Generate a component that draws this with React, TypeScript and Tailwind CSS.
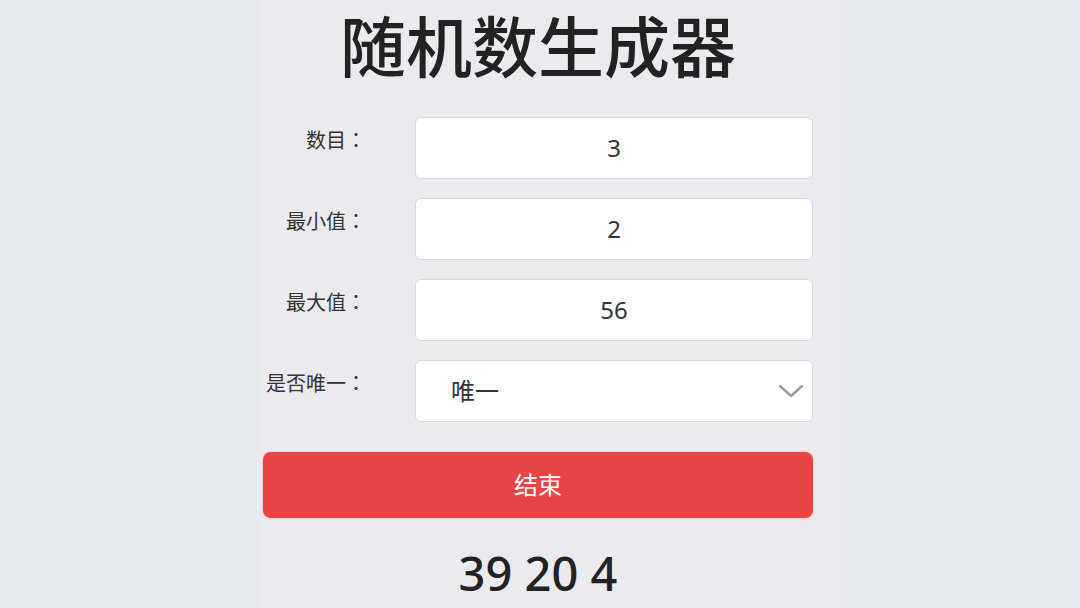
import React from "react";

const font = { fontFamily: '"Noto Sans", "Noto Sans CJK SC", sans-serif' };
const colonFont = { fontFamily: '"Noto Sans CJK JP", sans-serif' };

const Label: React.FC<{ text: string }> = ({ text }) => (
  <label className="w-[103px] pt-[9px] text-right text-[20px] leading-[28px] text-[#333]">
    {text}
    <span style={colonFont}>：</span>
  </label>
);

interface FieldProps {
  label: string;
  value: string;
}

const Field: React.FC<FieldProps> = ({ label, value }) => (
  <div className="flex items-start h-[62px]">
    <Label text={label} />
    <div className="ml-[49px] w-[398px] h-[62px] flex items-center justify-center bg-white border border-[#d8d8dd] rounded-[6px] text-[24px] text-[#333]">
      {value}
    </div>
  </div>
);

export default function App() {
  const fields = [
    { label: "数目", value: "3" },
    { label: "最小值", value: "2" },
    { label: "最大值", value: "56" },
  ];

  return (
    <div className="min-h-screen bg-[#e7eaed] flex" style={font}>
      <div className="ml-[260px] w-[580px] min-h-screen bg-[#ebebef] pl-[3px] pr-[27px] pt-[13px]">
        <h1 className="text-center text-[66px] leading-[66px] font-medium text-[#222]">
          随机数生成器
        </h1>

        <div className="mt-[38px] flex flex-col gap-[19px]">
          {fields.map((f) => (
            <Field key={f.label} label={f.label} value={f.value} />
          ))}

          <div className="flex items-start h-[62px]">
            <Label text="是否唯一" />
            <div className="ml-[49px] w-[398px] h-[62px] flex items-center justify-between pl-[35px] pr-[8px] bg-white border border-[#d8d8dd] rounded-[6px] text-[24px] text-[#333]">
              <span>唯一</span>
              <svg width="26" height="16" viewBox="0 0 26 16" fill="none">
                <polyline
                  points="2,3 13,13 24,3"
                  stroke="#9a9a9f"
                  strokeWidth="2.4"
                  strokeLinecap="round"
                  strokeLinejoin="round"
                />
              </svg>
            </div>
          </div>
        </div>

        <button className="mt-[30px] w-full h-[66px] rounded-[8px] bg-[#e84545] text-white text-[24px] shadow-[0_0_2px_rgba(232,69,69,0.6)]">
          结束
        </button>

        <div className="mt-[33px] text-center text-[47px] leading-[44px] font-medium text-[#222]">
          39 20 4
        </div>
      </div>
    </div>
  );
}
